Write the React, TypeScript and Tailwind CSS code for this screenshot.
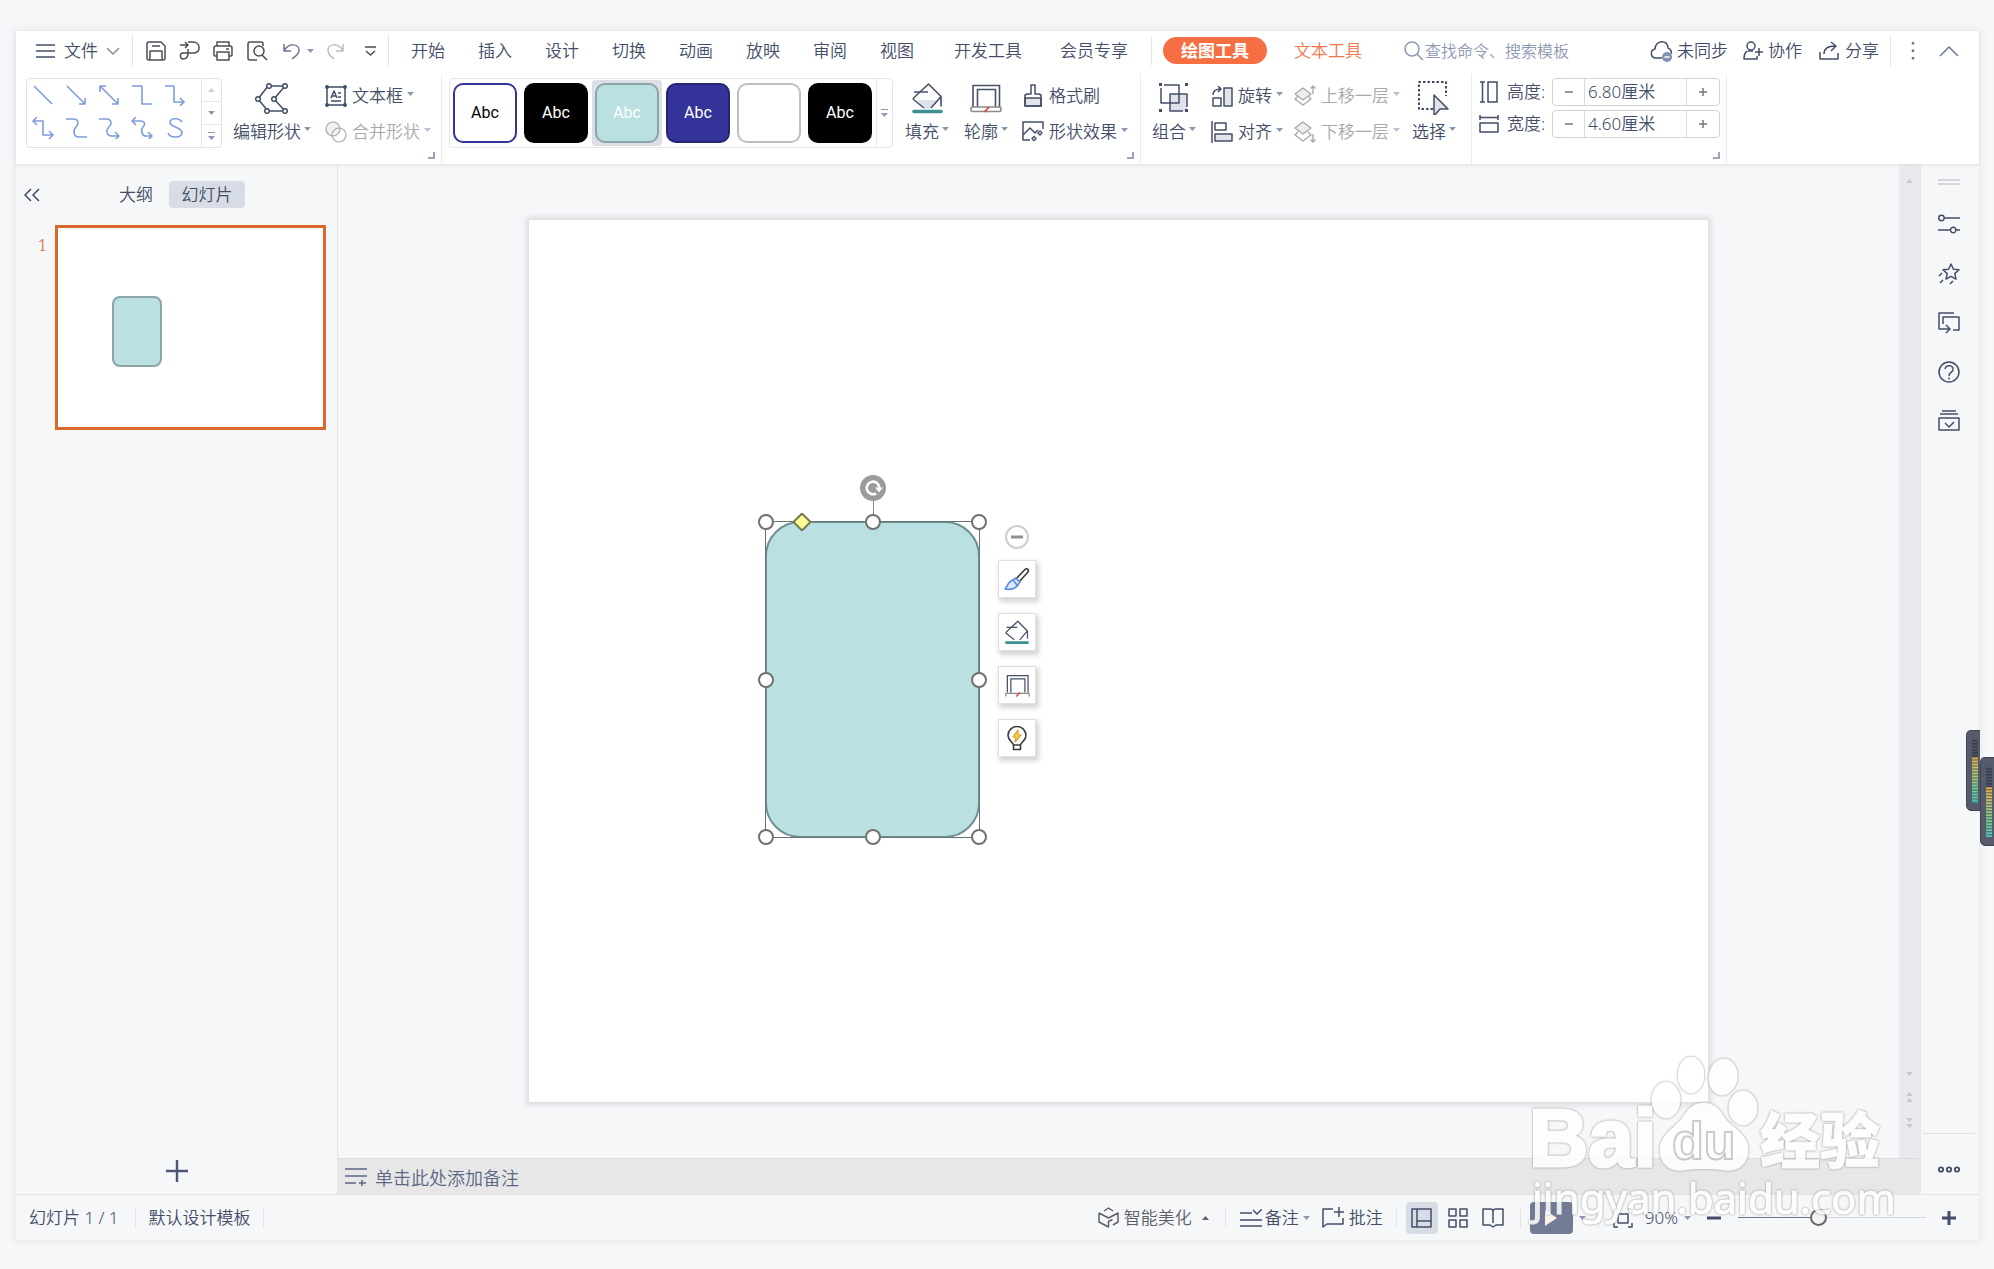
import React, { useState } from 'react';
import { clsx } from 'clsx';

interface IconProps {
  w: number;
  h: number;
  className?: string;
  sw?: number;
  children: React.ReactNode;
}

const Icon: React.FC<IconProps> = ({ w, h, className, sw = 1.5, children }) => (
  <svg
    width={w}
    height={h}
    viewBox={`0 0 ${w} ${h}`}
    fill="none"
    stroke="currentColor"
    strokeWidth={sw}
    strokeLinejoin="round"
    className={clsx('shrink-0', className)}
    aria-hidden="true"
  >
    {children}
  </svg>
);

const Caret: React.FC<{ up?: boolean; className?: string }> = ({ up, className }) => (
  <svg width="7" height="4" viewBox="0 0 7 4" className={clsx('shrink-0', className ?? 'text-[#8d98b3]')} aria-hidden="true">
    <path d={up ? 'M0 4h7L3.5 0z' : 'M0 0h7L3.5 4z'} fill="currentColor" />
  </svg>
);

const Launcher = () => (
  <button type="button" aria-label="更多设置" className="absolute right-1.5 bottom-[5px] text-[#9aa4bb]">
    <Icon w={7} h={7} sw={2}><path d="M6 0v6H0" strokeLinejoin="miter" /></Icon>
  </button>
);

const Divider: React.FC<{ className?: string }> = ({ className }) => (
  <div className={clsx('w-px shrink-0 bg-[#e3e5ea]', className)} />
);

/* Ribbon buttons */

interface ToolProps {
  icon: React.ReactNode;
  label: string;
  caret?: boolean;
  disabled?: boolean;
  className?: string;
}

const BigTool: React.FC<ToolProps> = ({ icon, label, className }) => (
  <button type="button" className={clsx('flex flex-col items-center pt-1 whitespace-nowrap', className)}>
    <span className="flex h-8 items-center">{icon}</span>
    <span className="mt-[7px] flex h-[22px] items-center gap-[3px]">
      {label}
      <Caret className="mb-1.5 text-[#8d98b3]" />
    </span>
  </button>
);

const SmallTool: React.FC<ToolProps> = ({ icon, label, caret = true, disabled }) => (
  <button
    type="button"
    disabled={disabled}
    className={clsx('flex h-[26px] items-center whitespace-nowrap', disabled && 'text-[#a9a9a9]')}
  >
    <span className="flex w-[22px] justify-center">{icon}</span>
    <span className="ml-[5px]">{label}</span>
    {caret && <Caret className={clsx('mb-1 ml-1', disabled ? 'text-[#b9c2d4]' : 'text-[#8d98b3]')} />}
  </button>
);

const BucketIcon: React.FC<{ small?: boolean }> = ({ small }) => (
  <svg width={small ? 24 : 31} height={small ? 25 : 31} viewBox="0 0 31 31" fill="none" stroke="#46506b" strokeWidth="1.6" strokeLinejoin="round" aria-hidden="true">
    {!small && <path d="M5 17h21l-9 9h-4z" fill="#dfe2e8" stroke="none" />}
    <path d="M12 25L1.500 16.500Q1 15.500 2 14.500L16.500 1L29 13.500L19 25M29 13.500v10M2 9h14" />
    <path d="M2 28.500h27" stroke="#3d8f92" strokeWidth="3.600" strokeLinecap="round" />
  </svg>
);

const OutlineIcon: React.FC<{ small?: boolean }> = ({ small }) => (
  <svg width={small ? 25 : 32} height={small ? 25 : 30} viewBox="0 0 32 30" fill="none" stroke="#46506b" strokeWidth="1.6" aria-hidden="true">
    <path d="M3 24V2.500h26.500V24M7.500 24V6.500h18V24" />
    {small ? (
      <path d="M1 29v-4h30v4" stroke="#8a8a8a" />
    ) : (
      <rect x="1" y="24" width="30" height="4.500" rx="1.500" stroke="#8a8a8a" fill="#fff" />
    )}
    <path d="M14.500 29l4.500-5" stroke="#e0443e" strokeWidth="1.8" />
  </svg>
);

const LayersIcon: React.FC<{ up?: boolean }> = ({ up }) => (
  <Icon w={22} h={22} sw={1.4}>
    <path d="M1 8l8-6 8 6-8 6z" transform={up ? 'translate(0 1)' : 'translate(0 -1)'} fill="#eee" />
    <path d="M4 12l-3 3 8 6 8-6-3-3" transform="translate(0 -1)" />
    {up ? <path d="M19 9V1M16.500 3.500L19 1l2.500 2.500" /> : <path d="M19 13v8M16.500 18.500L19 21l2.500-2.500" />}
  </Icon>
);

const LINES = [
  'M2 2l18 18',
  'M2 2l18 18M20 14v6h-6',
  'M2 2l18 18M20 14v6h-6M8 2H2v6',
  'M1 2h10v18h10',
  'M1 2h9v16h10M16 14l4 4-4 4',
  'M2 4h9v14h10M17 14l4 4-4 4M5 0L1 4l4 4',
  'M1 2h7c6 0 6 5 3 8s-3 10 3 10h8',
  'M1 2h7c6 0 6 5 3 8s-3 9 3 9h7M17 15l4 4-4 4',
  'M2 4h7c6 0 5 4 3 6s-2 9 3 9h6M17 15l4 4-4 4M5 0L1 4l4 4',
  'M18 5c-3-5-13-4-12 1 1 4 11 4 12 9 0 7-12 6-14 1',
];

const SWATCHES = [
  { name: '样式 1', cls: 'border-[#333399] bg-white text-black' },
  { name: '样式 2', cls: 'border-black bg-black text-white' },
  { name: '样式 3', cls: 'border-[#8aa6a8] bg-[#bae0e2] text-white', selected: true },
  { name: '样式 4', cls: 'border-[#262670] bg-[#333399] text-white' },
  { name: '样式 5', cls: 'border-[#bfbfbf] bg-white text-transparent', empty: true },
  { name: '样式 6', cls: 'border-black bg-black text-white' },
];

const SizeField: React.FC<{ id: string; label: string; initial: string; icon: React.ReactNode }> = ({ id, label, initial, icon }) => {
  const [value, setValue] = useState(initial);
  const step = (d: number) => setValue(v => `${(parseFloat(v) + d).toFixed(2)}厘米`);
  return (
    <div className="flex h-7 items-center">
      <span className="flex w-5 justify-center">{icon}</span>
      <label htmlFor={id} className="ml-2 w-[45px]">{label}</label>
      <div className="flex h-7 w-[168px] rounded-sm border border-[#cfd2d8]">
        <button type="button" aria-label="减小" onClick={() => step(-0.1)} className="flex w-[31px] items-center justify-center text-[#777]">
          <Icon w={8} h={8}><path d="M0 4h8" /></Icon>
        </button>
        <input
          id={id}
          value={value}
          onChange={e => setValue(e.target.value)}
          className="w-0 flex-1 border-x border-[#d9dbe0] px-[3px] outline-none"
        />
        <button type="button" aria-label="增大" onClick={() => step(0.1)} className="flex w-8 items-center justify-center text-[#777]">
          <Icon w={8} h={8}><path d="M0 4h8M4 0v8" /></Icon>
        </button>
      </div>
    </div>
  );
};

const MenuBar = () => (
  <header className="flex h-[38px] items-center pt-px pr-5 pl-5 whitespace-nowrap">
    <button type="button" className="flex items-center">
      <Icon w={19} h={14}><path d="M0 1h19M0 7h19M0 13h19" /></Icon>
      <span className="ml-[9px]">文件</span>
      <Icon w={14} h={8} className="ml-2 text-[#8c8f98]"><path d="M1 1l6 6 6-6" /></Icon>
    </button>
    <Divider className="ml-3 h-8" />
    <div className="ml-[13px] flex items-center text-[#4a4d55]">
      <button type="button" aria-label="保存">
        <Icon w={20} h={20}><path d="M1 3q0-2 2-2h12l4 4v12q0 2-2 2H3q-2 0-2-2zM4 19v-9h12v9M6 5h8" /></Icon>
      </button>
      <button type="button" aria-label="输出为PDF" className="ml-[13px]">
        <Icon w={21} h={20}><path d="M1 4h8M6 1l3 3-3 3M9 1h5c8 0 8 11 1 11H4c-4 0-3 6 0 6s5-2 5-6V8" /></Icon>
      </button>
      <button type="button" aria-label="打印" className="ml-[13px]">
        <Icon w={20} h={20}><path d="M4 5V1h12v4M4 15H2q-1 0-1-1V7q0-2 2-2h14q2 0 2 2v7q0 1-1 1h-2M4 11h12v8H4zM13 8h3" /></Icon>
      </button>
      <button type="button" aria-label="打印预览" className="ml-3.5">
        <Icon w={21} h={20}><path d="M16 5V3q0-2-2-2H3Q1 1 1 3v14q0 2 2 2h7M15 14l5 5" /><circle cx="12" cy="10" r="5" /></Icon>
      </button>
      <button type="button" aria-label="撤销" className="ml-[15px] flex items-center gap-1.5 text-[#6d7894]">
        <Icon w={18} h={18}><path d="M1 2v7h7M1 9c5-9 15-7 15-1 0 5-4 6-7 9" /></Icon>
        <Caret />
      </button>
      <button type="button" aria-label="恢复" className="ml-3 text-[#b9bbc0]">
        <Icon w={18} h={18}><path d="M17 2v7h-7M17 9C12 0 2 2 2 8c0 5 3 6 6 9" /></Icon>
      </button>
      <button type="button" aria-label="自定义快速访问工具栏" className="ml-[21px]">
        <Icon w={11} h={10}><path d="M0 1h11M1 5l4.500 4L10 5" /></Icon>
      </button>
    </div>
    <Divider className="ml-3 h-8" />
    <nav className="ml-[22px] flex items-center">
      <div className="flex gap-[33px]">
        {['开始', '插入', '设计', '切换', '动画', '放映', '审阅', '视图'].map(t => (
          <button key={t} type="button">{t}</button>
        ))}
      </div>
      <button type="button" className="ml-10">开发工具</button>
      <button type="button" className="ml-[38px]">会员专享</button>
      <Divider className="ml-[23px] h-7" />
      <button type="button" className="ml-[11px] h-[27px] w-[104px] rounded-full bg-[#f66f42] font-bold text-white">绘图工具</button>
      <button type="button" className="ml-[27px] text-[#f4764c]">文本工具</button>
    </nav>
    <label className="ml-[42px] flex items-center text-[#8d98b3]">
      <Icon w={20} h={20}><circle cx="8" cy="8" r="7" /><path d="M13 13l6 6" /></Icon>
      <input aria-label="查找命令、搜索模板" placeholder="查找命令、搜索模板" className="ml-px w-[160px] text-base outline-none placeholder:text-[#8d98b3]" />
    </label>
    <div className="ml-auto flex items-center">
      <button type="button" className="flex items-center gap-1">
        <Icon w={23} h={22}>
          <path d="M12 18H6C0 18 0 10 5 9c0-9 13-10 13-1 3 1 4 4 3 6" />
          <circle cx="17" cy="17" r="5" fill="#8491b0" stroke="none" />
          <path d="M14.500 17h5" stroke="#fff" />
        </Icon>
        未同步
      </button>
      <button type="button" className="ml-[15px] flex items-center gap-[5px]">
        <Icon w={20} h={20}>
          <circle cx="8" cy="5" r="4" />
          <path d="M4.500 10C2 11 1 14 1 18h13v-3M5 10h5M16 7v8M12 11h8" />
        </Icon>
        协作
      </button>
      <button type="button" className="ml-[17px] flex items-center gap-[5px]">
        <Icon w={21} h={20}><path d="M1 11v7h18v-6M5 13c0-6 4-8 11-8M12 1l5 4-5 5" /></Icon>
        分享
      </button>
      <Divider className="ml-[11px] h-[30px]" />
      <button type="button" aria-label="更多" className="ml-5 text-[#6d7894]">
        <Icon w={4} h={18}><path d="M2 0v2.500M2 7.500V10M2 15v2.500" strokeWidth="2.500" /></Icon>
      </button>
      <button type="button" aria-label="收起功能区" className="ml-6 text-[#6d7894]">
        <Icon w={20} h={12}><path d="M1 11l9-9 9 9" /></Icon>
      </button>
    </div>
  </header>
);

const Ribbon = () => (
  <div className="flex items-stretch pt-[5px] pl-2.5">
    {/* Shapes */}
    <div className="relative flex h-[90px] items-start border-r border-[#ececef] pt-1 pr-2.5">
      <div className="flex h-[70px] w-[196px] rounded-sm border border-[#e0e2e6] text-[#7e9ddb]">
        <div className="grid flex-1 grid-cols-5 content-center gap-y-[11px] pr-2.5 pb-1">
          {LINES.map(d => (
            <button key={d} type="button" aria-label="连接线" className="flex justify-center">
              <Icon w={22} h={22} sw={1.6}><path d={d} /></Icon>
            </button>
          ))}
        </div>
        <div className="flex w-5 flex-col divide-y divide-[#e6e8ec] border-l border-[#e6e8ec]">
          <button type="button" aria-label="上一行" className="flex flex-1 items-center justify-center"><Caret up className="text-[#c9cfdc]" /></button>
          <button type="button" aria-label="下一行" className="flex flex-1 items-center justify-center"><Caret /></button>
          <button type="button" aria-label="展开" className="flex flex-1 flex-col items-center justify-center gap-[3px]">
            <span className="h-px w-[7px] bg-[#8d98b3]" />
            <Caret />
          </button>
        </div>
      </div>
      <BigTool
        className="ml-[11px]"
        label="编辑形状"
        icon={
          <Icon w={34} h={31}>
            <path d="M13 3h17L19 16l11 12H13L3 16z" />
            <g fill="#fff">
              <circle cx="14" cy="3" r="2.300" /><circle cx="30" cy="3" r="2.300" /><circle cx="3" cy="16" r="2.300" />
              <circle cx="19" cy="16" r="2.300" /><circle cx="12" cy="28" r="2.300" /><circle cx="30" cy="28" r="2.300" />
            </g>
          </Icon>
        }
      />
      <div className="ml-3.5 flex flex-col gap-2.5 pt-[5px]">
        <SmallTool
          label="文本框"
          icon={
            <Icon w={22} h={22}>
              <path d="M2 2h18v18H2zM6 16h10M13 8h3M13 12h3M6 13l3-7 3 7M7 11h4" />
              <g fill="currentColor">
                <circle cx="2" cy="2" r="1.200" /><circle cx="20" cy="2" r="1.200" /><circle cx="2" cy="20" r="1.200" /><circle cx="20" cy="20" r="1.200" />
              </g>
            </Icon>
          }
        />
        <SmallTool disabled label="合并形状" icon={<Icon w={22} h={22} sw={1.2}><circle cx="8" cy="8" r="7" fill="#f2f2f2" /><circle cx="14" cy="14" r="7" /></Icon>} />
      </div>
      <Launcher />
    </div>

    {/* Shape styles */}
    <div className="relative flex h-[90px] items-start border-r border-[#ececef] pt-1 pr-3 pl-[7px]">
      <div className="flex h-[70px] w-[444px] rounded-sm border border-[#e4e6ea]">
        <div className="flex flex-1 gap-px">
          {SWATCHES.map(s => (
            <button
              key={s.name}
              type="button"
              aria-label={s.name}
              className={clsx('my-px flex w-[70px] items-center justify-center rounded-sm', s.selected && 'bg-[#dbe0e6]')}
            >
              <span className={clsx('flex h-[60px] w-16 items-center justify-center rounded-[10px] border-2 font-[Roboto,sans-serif] text-base font-normal', s.cls)}>
                {!s.empty && 'Abc'}
              </span>
            </button>
          ))}
        </div>
        <button type="button" aria-label="更多样式" className="flex w-4 flex-col items-center justify-center gap-[3px] border-l border-[#e6e8ec]">
          <span className="h-px w-[7px] bg-[#8d98b3]" />
          <Caret />
        </button>
      </div>
      <BigTool className="ml-3" label="填充" icon={<BucketIcon />} />
      <BigTool className="ml-[15px]" label="轮廓" icon={<OutlineIcon />} />
      <div className="ml-[14px] flex flex-col gap-2.5 pt-[5px]">
        <SmallTool
          label="格式刷"
          caret={false}
          icon={
            <Icon w={18} h={24}>
              <path d="M1 14h16v8H1z" fill="#e2e4e9" />
              <path d="M1 22V11l2-1h4V1h4v9h4l2 1v11z" />
            </Icon>
          }
        />
        <SmallTool
          label="形状效果"
          icon={
            <Icon w={22} h={22}>
              <path d="M8 19H1V1h20v7M1 14l7-7 5 5 3-3" />
              <path d="M18 9l3 3-3 3-3-3zM12 14.500l3 3-3 3-3-3z" fill="currentColor" stroke="none" />
              <path d="M18 11.200v1.600M12 16.700v1.600" stroke="#fff" />
            </Icon>
          }
        />
      </div>
      <Launcher />
    </div>

    {/* Arrange */}
    <div className="flex h-[90px] items-start border-r border-[#ececef] pt-1 pr-[15px] pl-[11px]">
      <BigTool
        label="组合"
        icon={
          <Icon w={30} h={30}>
            <path d="M11 11h17v17H11z" fill="#dfe2e8" stroke="none" />
            <path d="M5 2h15v18H2V5M28 24V11H11v17h13" />
            <g fill="currentColor" stroke="none">
              <path d="M0 0h3v3H0zM26 0h3v3h-3zM0 26h3v3H0zM26 26h3v3h-3z" />
            </g>
          </Icon>
        }
      />
      <div className="ml-[15px] flex flex-col gap-2.5 pt-[5px]">
        <SmallTool label="旋转" icon={<Icon w={21} h={21}><path d="M12 2h8v18h-8z" fill="#e2e4e9" /><path d="M1 12h8v8H1zM1 9c0-4 3-6 8-6M6 0l3 3-3 3" /></Icon>} />
        <SmallTool label="对齐" icon={<Icon w={22} h={22}><path d="M1 0v22M4 2h11v7H4z" /><path d="M4 13h17v7H4z" fill="#e2e4e9" /></Icon>} />
      </div>
      <div className="ml-[11px] flex flex-col gap-2.5 pt-[5px]">
        <SmallTool disabled label="上移一层" icon={<LayersIcon up />} />
        <SmallTool disabled label="下移一层" icon={<LayersIcon />} />
      </div>
      <BigTool
        className="ml-3"
        label="选择"
        icon={
          <Icon w={33} h={34}>
            <path d="M15 28H1V1h27v14" strokeDasharray="2.500 2" strokeWidth="2" />
            <path d="M16 14l14 14h-8l-6 7z" fill="#e2e4e9" />
          </Icon>
        }
      />
    </div>

    {/* Size */}
    <div className="relative flex h-[90px] flex-col gap-1 border-r border-[#ececef] pt-1 pr-1.5 pl-[7px]">
      <SizeField id="shape-height" label="高度:" initial="6.80厘米" icon={<Icon w={18} h={22}><path d="M0 1h5M2.500 1v20M0 21h5M8 1h9v20H8z" /></Icon>} />
      <SizeField id="shape-width" label="宽度:" initial="4.60厘米" icon={<Icon w={20} h={18}><path d="M1 0v5M1 2.500h18M19 0v5M1 8h18v9H1z" /></Icon>} />
      <Launcher />
    </div>
  </div>
);

const SlidePanel = () => (
  <aside className="flex w-[322px] shrink-0 flex-col border-r border-[#e4e5e9]">
    <div className="flex items-center pt-[17px] pl-2">
      <button type="button" aria-label="收起">
        <Icon w={16} h={14} sw={1.6}><path d="M7 1L1 7l6 6M15 1L9 7l6 6" /></Icon>
      </button>
      <button type="button" className="ml-[79px] h-[27px]">大纲</button>
      <button type="button" className="ml-4 h-[27px] w-[76px] rounded-sm bg-[#d8dde5]">幻灯片</button>
    </div>
    <div className="mt-[17px] flex pr-[11px] pl-[22px]">
      <span className="mt-2.5 w-[17px] font-[Noto_Serif,'Liberation_Serif',serif] text-base leading-5 text-[#d9692a]">1</span>
      <button type="button" aria-label="幻灯片 1" className="relative aspect-[271/205] flex-1 border-[3px] border-[#d9692a] bg-white">
        <span className="absolute top-[34%] left-[54px] h-[36%] w-[19%] rounded-lg border-2 border-[#8aa6a8] bg-[#bae0e2]" />
      </button>
    </div>
    <button type="button" aria-label="新建幻灯片" className="mx-auto mt-auto mb-3 text-[#4d5878]">
      <Icon w={22} h={22} sw={2.4}><path d="M0 11h22M11 0v22" /></Icon>
    </button>
  </aside>
);

const HANDLES = [
  'left-0 top-0', 'left-1/2 top-0', 'left-full top-0',
  'left-0 top-1/2', 'left-full top-1/2',
  'left-0 top-full', 'left-1/2 top-full', 'left-full top-full',
];

const QUICK_TOOLS = [
  {
    name: '画笔',
    icon: (
      <Icon w={26} h={24} sw={1.6}>
        <path d="M12 12L21 2.500q2-1.500 3 0t-.5 3L15 15" stroke="#3c3c3c" />
        <path d="M12 11l4 4-2 3c-3 4-8 5-13 4 2-1 2-6 6-8zM9 13l4 5" stroke="#5b8be6" fill="#dce8fd" />
      </Icon>
    ),
  },
  { name: '填充', icon: <BucketIcon small /> },
  { name: '轮廓', icon: <OutlineIcon small /> },
  {
    name: '智能推荐',
    icon: (
      <Icon w={20} h={25} sw={1.6}>
        <path d="M6.500 19C6 16 1 15 1 9.500a9 9 0 0 1 18 0C19 15 14 16 13.500 19v4.500h-7zM6.500 19h7" stroke="#3c3c3c" />
        <path d="M11 4l-5 7h3l-1 5 6-7h-3z" fill="#ffd83b" stroke="#e7962d" strokeWidth="1.200" />
      </Icon>
    ),
  },
];

const Slide = () => (
  <div className="relative aspect-[1180/883] w-full bg-white shadow-[0_0_5px_3px_#dcdde0]">
    {/* Selected rounded rectangle */}
    <div className="absolute top-[301px] left-[236px] h-[317px] w-[215px] border border-[#777]">
      <div className="absolute -inset-px rounded-[35px] border-2 border-[#6f9093] bg-[#bae0e2]" />
      <div className="absolute -inset-px border border-[#5d6b6d]/60" />
      <div className="absolute -top-6 left-1/2 h-6 w-px bg-[#8a8a8a]" />
      <svg width="26" height="26" viewBox="0 0 26 26" className="absolute -top-[47px] left-1/2 -translate-x-1/2" aria-hidden="true">
        <circle cx="13" cy="13" r="13" fill="#9b9b9b" />
        <path d="M16 18.500A6.300 6.300 0 1 1 19.300 13" fill="none" stroke="#fff" strokeWidth="2.600" />
        <path d="M15 12.500h8l-4 5z" fill="#fff" />
      </svg>
      {HANDLES.map(pos => (
        <span key={pos} className={clsx('absolute size-4 -translate-1/2 rounded-full border-2 border-[#707070] bg-white', pos)} />
      ))}
      <span className="absolute top-0 left-9 size-[14px] -translate-1/2 rotate-45 rounded-xs border-2 border-[#77774f] bg-[#fdfd96]" />
    </div>
    {/* Floating quick toolbar */}
    <div className="absolute top-[305px] left-[469px] flex w-[38px] flex-col items-center">
      <button type="button" aria-label="收起工具" className="mb-[11px] flex size-6 items-center justify-center rounded-full border-2 border-[#cfcfcf] bg-white text-[#8f8f8f]">
        <Icon w={12} h={4} sw={3}><path d="M0 2h12" /></Icon>
      </button>
      <div className="flex flex-col gap-[15px]">
        {QUICK_TOOLS.map(t => (
          <button
            key={t.name}
            type="button"
            aria-label={t.name}
            className="flex size-[38px] items-center justify-center border border-[#e0e0e0] bg-white shadow-[2px_3px_5px_1px_#d4d4d4]"
          >
            {t.icon}
          </button>
        ))}
      </div>
    </div>
  </div>
);

const Workspace = () => (
  <main className="flex flex-1 flex-col">
    <div className="flex flex-1">
      <div className="flex-1 pt-14 pr-[191px] pb-[55px] pl-[191px]">
        <Slide />
      </div>
      <div className="flex w-5 shrink-0 flex-col items-center bg-[#e8eaef] pt-[15px] pb-[30px]">
        <Caret up className="text-[#c6c8cd]" />
        <Caret className="mt-auto text-[#c6c8cd]" />
        <div className="mt-4 flex flex-col gap-[2px]">
          <Caret up className="text-[#c6c8cd]" />
          <Caret up className="text-[#c6c8cd]" />
        </div>
        <div className="mt-4 flex flex-col gap-[2px]">
          <Caret className="text-[#c6c8cd]" />
          <Caret className="text-[#c6c8cd]" />
        </div>
      </div>
    </div>
    <div className="flex h-9 items-center border-t border-[#dcdde0] bg-[#e7e7e7] pl-[7px] text-[#5b6785]">
      <Icon w={22} h={18}><path d="M0 1h22M0 8h22M0 15h11M17 12v6M14 15h7" /></Icon>
      <input aria-label="备注" placeholder="单击此处添加备注" className="ml-2 flex-1 pt-0.5 text-lg outline-none placeholder:text-[#5b6785]" />
    </div>
  </main>
);

const SIDE_ICONS = [
  { name: '对象属性', d: 'M6 4h16M0 16h12M18 16h4M0.800 4a2.700 2.700 0 1 0 5.400 0a2.700 2.700 0 1 0-5.400 0M12.500 16a2.700 2.700 0 1 0 5.400 0a2.700 2.700 0 1 0-5.400 0' },
  { name: '动画', d: 'M13 1l2.400 5.200 5.600.6-4.200 3.800 1.200 5.600-5-2.800-5 2.800 1.200-5.600L5 6.800l5.600-.6zM4 10l-3 3M5 17l-3 3M15 18l-3 3' },
  { name: '切换', d: 'M16 1H1v16h10M8 13l4 4-4 4M5 12V5h16v13h-6' },
  { name: '帮助', d: 'M1 11a10 10 0 1 0 20 0a10 10 0 1 0-20 0M7 8c1-5 9-4 8 1-1 3-4 2-4 6M11 16.500v2' },
  { name: '稿定', d: 'M4 1h14M2 4h18M1 8h20v12H1zM7 13l4 4 5-5' },
];

const SideBar = () => (
  <aside className="flex w-[60px] shrink-0 flex-col items-center border-l-2 border-[#e8e9ed] pr-0.5">
    <div className="mt-[15px] h-1.5 w-[22px] border-y-2 border-[#d6d7da]" />
    <div className="mt-[29px] flex flex-col gap-[27px]">
      {SIDE_ICONS.map(i => (
        <button key={i.name} type="button" aria-label={i.name}>
          <Icon w={22} h={22}><path d={i.d} /></Icon>
        </button>
      ))}
    </div>
    <button type="button" aria-label="更多面板" className="mt-auto flex h-[61px] w-[52px] items-center justify-center border-t border-[#dfe1e5] pt-2.5">
      <Icon w={22} h={7} sw={1.8}>
        <circle cx="3" cy="3.500" r="2.200" /><circle cx="11" cy="3.500" r="2.200" /><circle cx="19" cy="3.500" r="2.200" />
      </Icon>
    </button>
  </aside>
);

const StatusBar = () => {
  const [zoom, setZoom] = useState(42);
  return (
    <footer className="flex h-[46px] items-center border-t border-[#e2e3e7] pr-[23px] pl-[13px] whitespace-nowrap">
      <span>幻灯片 1 / 1</span>
      <Divider className="ml-4 h-5" />
      <span className="ml-[13px]">默认设计模板</span>
      <Divider className="ml-3 h-5" />
      <div className="ml-auto flex items-center">
        <button type="button" className="flex items-center text-[#5d6069]">
          <Icon w={21} h={21}><path d="M6 4l4.500-3L15 4M1 6l9.500 5L20 6v9l-5 3M1 6v9l9.500 5v-5.500l4-2" /></Icon>
          <span className="ml-[5px]">智能美化</span>
          <Caret up className="ml-2.5 text-[#5d6069]" />
        </button>
        <Divider className="ml-4 h-5" />
        <button type="button" className="ml-3.5 flex items-center">
          <Icon w={22} h={18}><path d="M0 4h12M0 11h22M0 17h22M13 1l4 4 5-5" /></Icon>
          <span className="ml-[3px]">备注</span>
          <Caret className="ml-1 text-[#8d98b3]" />
        </button>
        <button type="button" className="ml-3 flex items-center">
          <Icon w={22} h={21}><path d="M11 2H1v18l4-3h16v-6M17 0v10M12 5h10" /></Icon>
          <span className="ml-[5px]">批注</span>
        </button>
        <Divider className="ml-[13px] h-5" />
        <button type="button" aria-label="普通视图" className="ml-[9px] flex size-8 items-center justify-center rounded-sm bg-[#d8dde5]">
          <Icon w={21} h={20}><path d="M1 1h19v18H1zM6 1v18M6 13h14" /></Icon>
        </button>
        <button type="button" aria-label="幻灯片浏览" className="ml-2.5">
          <Icon w={20} h={20}><path d="M1 1h7v7H1zM12 1h7v7h-7zM1 12h7v7H1zM12 12h7v7h-7z" /></Icon>
        </button>
        <button type="button" aria-label="阅读视图" className="ml-3.5">
          <Icon w={22} h={20}><path d="M1 1h7q3 0 3 2 0-2 3-2h7v16h-7l-3 2-3-2H1zM11 3v12" /></Icon>
        </button>
        <Divider className="ml-4 h-5" />
        <button type="button" aria-label="放映" className="ml-[9px] flex h-8 w-[43px] items-center justify-center rounded-sm bg-[#717b95]">
          <svg width="14" height="16" viewBox="0 0 14 16" aria-hidden="true"><path d="M1 0l12 8-12 8z" fill="#fdf1ec" /></svg>
        </button>
        <Caret className="ml-1.5 text-[#8d98b3]" />
        <Divider className="ml-3 h-5" />
        <button type="button" aria-label="适应窗口" className="ml-3.5">
          <Icon w={20} h={20}><path d="M1 5V1h4M15 1h4v4M19 15v4h-4M5 19H1v-4M5 6h10v9H5z" /></Icon>
        </button>
        <button type="button" className="ml-3 flex items-center gap-1.5">
          90%
          <Caret />
        </button>
        <button type="button" aria-label="缩小" className="ml-4">
          <Icon w={14} h={14} sw={3}><path d="M0 7h14" /></Icon>
        </button>
        <input
          type="range"
          aria-label="显示比例"
          value={zoom}
          onChange={e => setZoom(Number(e.target.value))}
          className="ml-[17px] h-[18px] w-[188px] appearance-none bg-[linear-gradient(to_right,#6b7690_43%,#d3d6dc_43%)] bg-[length:100%_1px] bg-center bg-no-repeat [&::-webkit-slider-thumb]:size-[17px] [&::-webkit-slider-thumb]:appearance-none [&::-webkit-slider-thumb]:rounded-full [&::-webkit-slider-thumb]:border-2 [&::-webkit-slider-thumb]:border-solid [&::-webkit-slider-thumb]:border-[#666] [&::-webkit-slider-thumb]:bg-[#f3f3f3]"
        />
        <button type="button" aria-label="放大" className="ml-4">
          <Icon w={14} h={14} sw={3}><path d="M0 7h14M7 0v14" /></Icon>
        </button>
      </div>
    </footer>
  );
};

/* Volume meter tabs docked on the screen edge */
const LevelMeter: React.FC<{ id: string; h: number; className?: string }> = ({ id, h, className }) => (
  <svg width="14" height={h} viewBox={`0 0 14 ${h}`} className={className} aria-hidden="true">
    <defs>
      <linearGradient id={id} gradientUnits="userSpaceOnUse" x1="0" y1={h * 0.34} x2="0" y2={h * 0.9}>
        <stop offset="0" stopColor="#e3a745" />
        <stop offset="0.2" stopColor="#cdbf55" />
        <stop offset="0.6" stopColor="#7fce84" />
        <stop offset="1" stopColor="#43c9b5" />
      </linearGradient>
    </defs>
    <path d={`M15 .5H5q-4.500 0-4.500 5V${h - 6}q0 5 4.500 5.500h10z`} fill="#555b6b" stroke="#40444f" />
    <path d={`M9 ${h * 0.12}V${h * 0.34}`} stroke="#3c404c" strokeWidth="6" strokeDasharray="2 1" />
    <path d={`M9 ${h * 0.34}V${h * 0.9}`} stroke={`url(#${id})`} strokeWidth="6" strokeDasharray="2 1" />
  </svg>
);

const Watermark = () => (
  <svg
    width="380"
    height="180"
    viewBox="0 0 380 180"
    className="pointer-events-none absolute right-[89px] bottom-[43px] opacity-85 drop-shadow-[0_0_1px_#7c7c7c]"
    fill="#fff"
    stroke="#fff"
    strokeWidth="1"
  >
    <ellipse cx="141" cy="54" rx="14" ry="18" />
    <ellipse cx="166" cy="29" rx="13" ry="18" />
    <ellipse cx="198" cy="31" rx="14" ry="18" transform="rotate(8 198 31)" />
    <ellipse cx="218" cy="62" rx="14" ry="17" />
    <path d="M179 57c10 0 16 7 20 14 6 10 24 16 24 33 0 14-10 22-24 20-12-2-28-2-40 0-14 2-24-6-24-20 0-16 16-22 23-33 5-8 11-14 21-14z" />
    <text x="4" y="120" fontSize="82" fontWeight="700" className="font-['Liberation_Sans',sans-serif]" strokeWidth="3">Bai</text>
    <text x="147" y="113" fontSize="52" fontWeight="700" className="font-['Liberation_Sans',sans-serif]" stroke="#c2c4c6" strokeWidth="2">du</text>
    <text x="235" y="117" fontSize="60" fontWeight="900" className="font-['Noto_Sans_CJK_SC',sans-serif]">经验</text>
    <text x="7" y="168" fontSize="42" fontWeight="400" className="font-['Noto_Sans',sans-serif]">jingyan.baidu.com</text>
  </svg>
);

export default function App() {
  return (
    <div className="relative flex min-h-screen flex-col overflow-hidden bg-[#f7f8fa] pt-[31px] pr-[15px] pb-[29px] pl-4 font-['Noto_Sans','Noto_Sans_CJK_SC',sans-serif] text-[17px] leading-6 font-[350] text-[#434d68]">
      <div className="flex flex-1 flex-col bg-[#f5f7f9] shadow-[0_0_8px_2px_#e6e8ea]">
        <div className="z-10 bg-white shadow-[0_1px_3px_#dcdee2]">
          <MenuBar />
          <Ribbon />
        </div>
        <div className="flex flex-1">
          <SlidePanel />
          <Workspace />
          <SideBar />
        </div>
        <StatusBar />
      </div>
      <LevelMeter id="meter-a" h={81} className="absolute top-[730px] right-3.5" />
      <LevelMeter id="meter-b" h={89} className="absolute top-[757px] right-0" />
      <Watermark />
    </div>
  );
}
